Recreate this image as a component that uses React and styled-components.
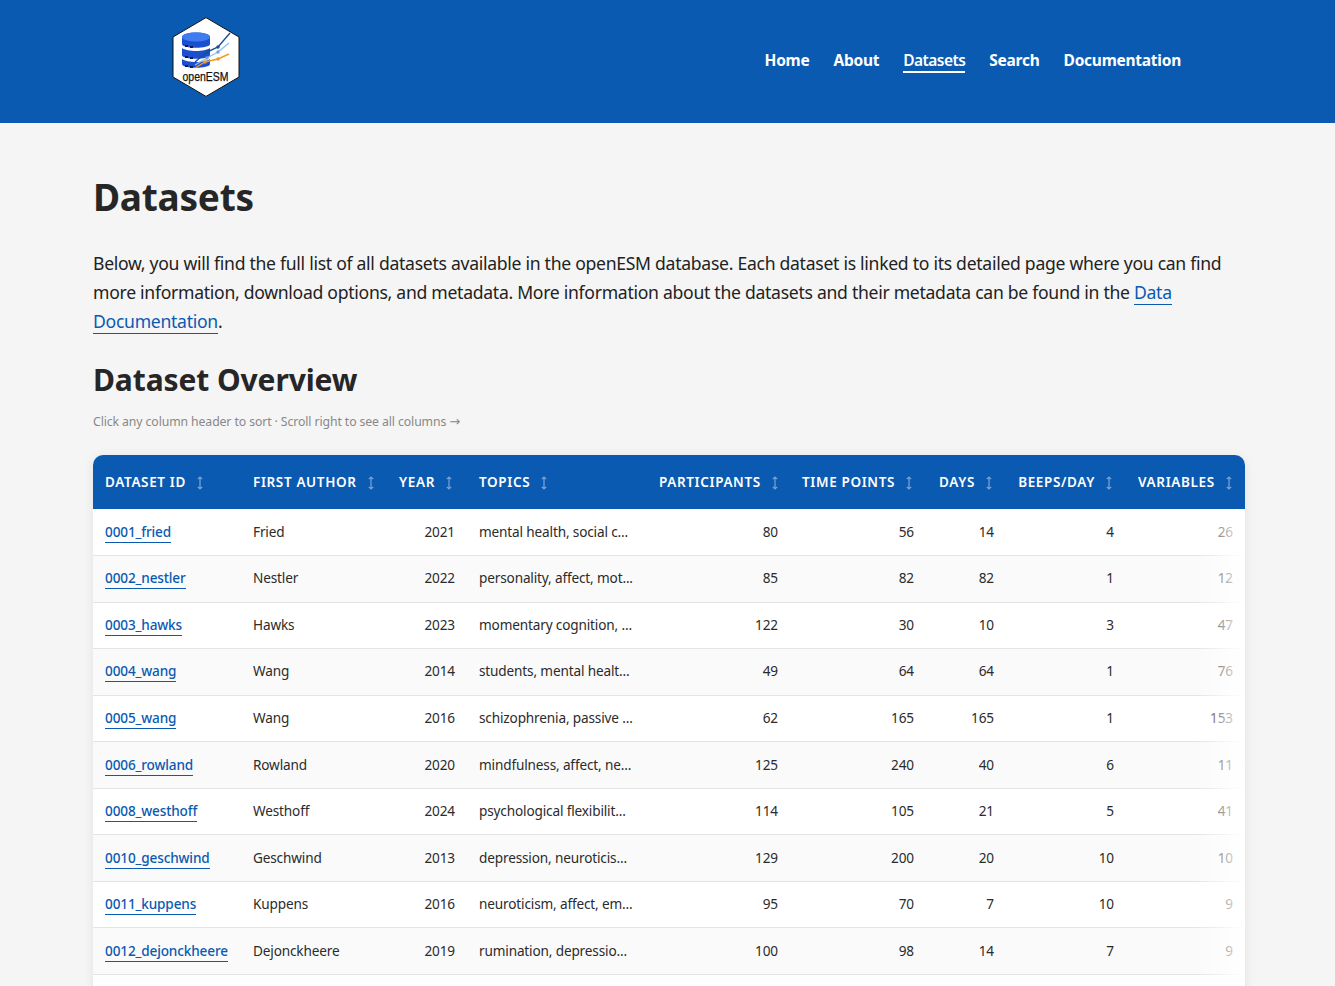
import styled, { createGlobalStyle } from 'styled-components';

const GlobalStyle = createGlobalStyle`
  html, body { margin: 0; padding: 0; background: #f5f5f5; }
  body {
    font-family: 'Noto Sans', 'Open Sans', sans-serif;
    color: #222;
    height: 986px;
    overflow: hidden;
  }
  * { box-sizing: border-box; }
`;

const BLUE = '#0a5ab2';

const rows = [
  ['0001_fried', 'Fried', 2021, 'mental health, social c...', 80, 56, 14, 4, 26],
  ['0002_nestler', 'Nestler', 2022, 'personality, affect, mot...', 85, 82, 82, 1, 12],
  ['0003_hawks', 'Hawks', 2023, 'momentary cognition, ...', 122, 30, 10, 3, 47],
  ['0004_wang', 'Wang', 2014, 'students, mental healt...', 49, 64, 64, 1, 76],
  ['0005_wang', 'Wang', 2016, 'schizophrenia, passive ...', 62, 165, 165, 1, 153],
  ['0006_rowland', 'Rowland', 2020, 'mindfulness, affect, ne...', 125, 240, 40, 6, 11],
  ['0008_westhoff', 'Westhoff', 2024, 'psychological flexibilit...', 114, 105, 21, 5, 41],
  ['0010_geschwind', 'Geschwind', 2013, 'depression, neuroticis...', 129, 200, 20, 10, 10],
  ['0011_kuppens', 'Kuppens', 2016, 'neuroticism, affect, em...', 95, 70, 7, 10, 9],
  ['0012_dejonckheere', 'Dejonckheere', 2019, 'rumination, depressio...', 100, 98, 14, 7, 9],
];

const columns = [
  { label: 'Dataset ID', width: 148 },
  { label: 'First Author', width: 146 },
  { label: 'Year', width: 80 },
  { label: 'Topics', width: 180 },
  { label: 'Participants', width: 143, right: true },
  { label: 'Time Points', width: 136, right: true },
  { label: 'Days', width: 80, right: true },
  { label: 'Beeps/Day', width: 120, right: true },
  { label: 'Variables', width: 119, right: true },
];

const Header = styled.header`
  height: 123px;
  background: ${BLUE};
  display: flex;
  align-items: center;
  justify-content: space-between;
  padding: 0 154px 0 171px;
`;

const Logo = styled.svg`
  display: block;
  width: 70px;
  height: 80px;
  margin-bottom: 9px;
`;

const Nav = styled.nav`
  display: flex;
  gap: 24px;
  margin-bottom: 1px;
`;

const NavLink = styled.a`
  color: #fff;
  font-size: 15.5px;
  line-height: 20px;
  padding-bottom: 1px;
  border-bottom: 2px solid ${({ $active }) => ($active ? '#fff' : 'transparent')};
  font-weight: ${({ $active }) => ($active ? 600 : 700)};
  letter-spacing: ${({ $active }) => ($active ? '-0.55px' : '-0.25px')};
`;

const Main = styled.main`
  padding: 49px 90px 0 93px;
`;

const Title = styled.h1`
  margin: 0 0 27px;
  font-size: 37px;
  line-height: 50px;
  font-weight: 700;
  letter-spacing: -0.25px;
  color: #262626;
`;

const Intro = styled.p`
  margin: 0 0 23px;
  font-size: 17.6px;
  line-height: 29px;
  letter-spacing: -0.29px;
  color: #222;
`;

const TextLink = styled.a`
  color: ${BLUE};
  border-bottom: 1px solid ${BLUE};
`;

const SubTitle = styled.h2`
  margin: 0 0 12px;
  font-size: 30px;
  line-height: 42px;
  font-weight: 700;
  letter-spacing: -0.1px;
  color: #262626;
`;

const Hint = styled.p`
  margin: 0 0 25px;
  font-size: 12.25px;
  line-height: 17px;
  letter-spacing: -0.1px;
  color: #888;
`;

const HintArrow = styled.span`
  font-family: 'DejaVu Sans', sans-serif;
  font-size: 13px;
`;

const TableWrap = styled.div`
  position: relative;
  width: 1152px;
  background: #fff;
  border-radius: 10px;
  overflow: hidden;
  box-shadow: 0 2px 12px rgba(0, 0, 0, 0.08);
`;

const Fade = styled.div`
  position: absolute;
  top: 54px;
  right: 0;
  bottom: 0;
  width: 50px;
  background: linear-gradient(to right, rgba(255, 255, 255, 0), rgba(255, 255, 255, 1));
  pointer-events: none;
`;

const Table = styled.table`
  width: 1152px;
  border-collapse: collapse;
  table-layout: fixed;
`;

const Th = styled.th`
  height: 54px;
  padding: 0 ${({ $right }) => ($right ? '13px' : '12px')} 0 12px;
  background: ${BLUE};
  color: #fff;
  font-size: 13.5px;
  font-weight: 600;
  letter-spacing: 0.64px;
  text-transform: uppercase;
  white-space: nowrap;
  text-align: ${({ $right }) => ($right ? 'right' : 'left')};
`;

const SortIcon = styled.svg`
  width: 8px;
  height: 14px;
  margin-left: 10px;
  vertical-align: -3px;
  opacity: 0.45;
`;

const Tr = styled.tr`
  background: ${({ $even }) => ($even ? '#fafafa' : '#fff')};
  border-bottom: 1px solid #e4e4e4;
`;

const Td = styled.td`
  height: 46.55px;
  padding: 0 12px 2px;
  font-size: 13.6px;
  letter-spacing: -0.15px;
  color: #2b2b2b;
  white-space: nowrap;
  text-align: ${({ $right }) => ($right ? 'right' : 'left')};
`;

const IdLink = styled.a`
  color: ${BLUE};
  font-weight: 500;
  border-bottom: 1px solid ${BLUE};
  padding-bottom: 1px;
`;

const SortArrows = () => (
  <SortIcon viewBox="0 0 8 14" fill="none" stroke="#fff" strokeWidth="1.2">
    <path d="M4 1v12M1.8 3.2 4 1l2.2 2.2M1.8 10.8 4 13l2.2-2.2" />
  </SortIcon>
);

const OpenEsmLogo = () => (
  <Logo viewBox="0 0 70 80">
    <polygon points="35,0.6 68,20 68,60 35,79.4 2,60 2,20" fill="#fff" stroke="#111" strokeWidth="1" />
    <path d="M11 20c0-6 28-6 28 0v7c0 5-28 5-28 0z" fill="#1c4fd0" />
    <path d="M11 31c5 4 23 4 28 0v7c0 5-28 5-28 0z" fill="#1c4fd0" />
    <path d="M11 42c5 4 23 4 28 0v5c0 5-28 5-28 0z" fill="#1c4fd0" />
    <ellipse cx="25" cy="20" rx="14" ry="4.5" fill="#3f7cf0" />
    <path d="M14 29h3M19 30h3M14 40h3M19 41h3M14 49h3M19 50h3" stroke="#0c1d55" strokeWidth="2.2" />
    <path d="M24 45 36 35 47 30 59 16" stroke="#1a4f94" strokeWidth="1.4" fill="none" />
    <path d="M24 48 36 41 47 35 58 26" stroke="#8fc0ee" strokeWidth="1.4" fill="none" />
    <path d="M24 51 34 45 47 42 58 37" stroke="#f09a20" strokeWidth="1.4" fill="none" />
    <circle cx="36" cy="35" r="1.7" fill="#1a4f94" />
    <circle cx="47" cy="30" r="1.7" fill="#1a4f94" />
    <circle cx="36" cy="41" r="1.7" fill="#6aa8e4" />
    <circle cx="47" cy="35" r="1.7" fill="#6aa8e4" />
    <circle cx="34" cy="45" r="1.7" fill="#f09a20" />
    <circle cx="47" cy="42" r="1.7" fill="#f09a20" />
    <text x="11.5" y="64" fontSize="13" fontFamily="'Liberation Sans', sans-serif" fill="#111" stroke="#111" strokeWidth="0.25" textLength="46" lengthAdjust="spacingAndGlyphs">openESM</text>
  </Logo>
);

export default function App() {
  return (
    <>
      <GlobalStyle />
      <Header>
        <OpenEsmLogo />
        <Nav>
          <NavLink>Home</NavLink>
          <NavLink>About</NavLink>
          <NavLink $active>Datasets</NavLink>
          <NavLink>Search</NavLink>
          <NavLink>Documentation</NavLink>
        </Nav>
      </Header>
      <Main>
        <Title>Datasets</Title>
        <Intro>
          Below, you will find the full list of all datasets available in the openESM database. Each dataset is linked to its detailed page where you can find more information, download options, and metadata. More information about the datasets and their metadata can be found in the <TextLink>Data Documentation</TextLink>.
        </Intro>
        <SubTitle>Dataset Overview</SubTitle>
        <Hint>Click any column header to sort · Scroll right to see all columns <HintArrow>→</HintArrow></Hint>
        <TableWrap>
          <Table>
            <colgroup>
              {columns.map(col => <col key={col.label} width={col.width} />)}
            </colgroup>
            <thead>
              <tr>
                {columns.map(col => (
                  <Th key={col.label} $right={col.right}>
                    {col.label}
                    <SortArrows />
                  </Th>
                ))}
              </tr>
            </thead>
            <tbody>
              {rows.map((row, i) => (
                <Tr key={row[0]} $even={i % 2 === 1}>
                  <Td><IdLink>{row[0]}</IdLink></Td>
                  <Td>{row[1]}</Td>
                  <Td $right>{row[2]}</Td>
                  <Td>{row[3]}</Td>
                  {row.slice(4).map((value, j) => <Td key={j} $right>{value}</Td>)}
                </Tr>
              ))}
              <Tr><Td colSpan={9} /></Tr>
            </tbody>
          </Table>
          <Fade />
        </TableWrap>
      </Main>
    </>
  );
}
